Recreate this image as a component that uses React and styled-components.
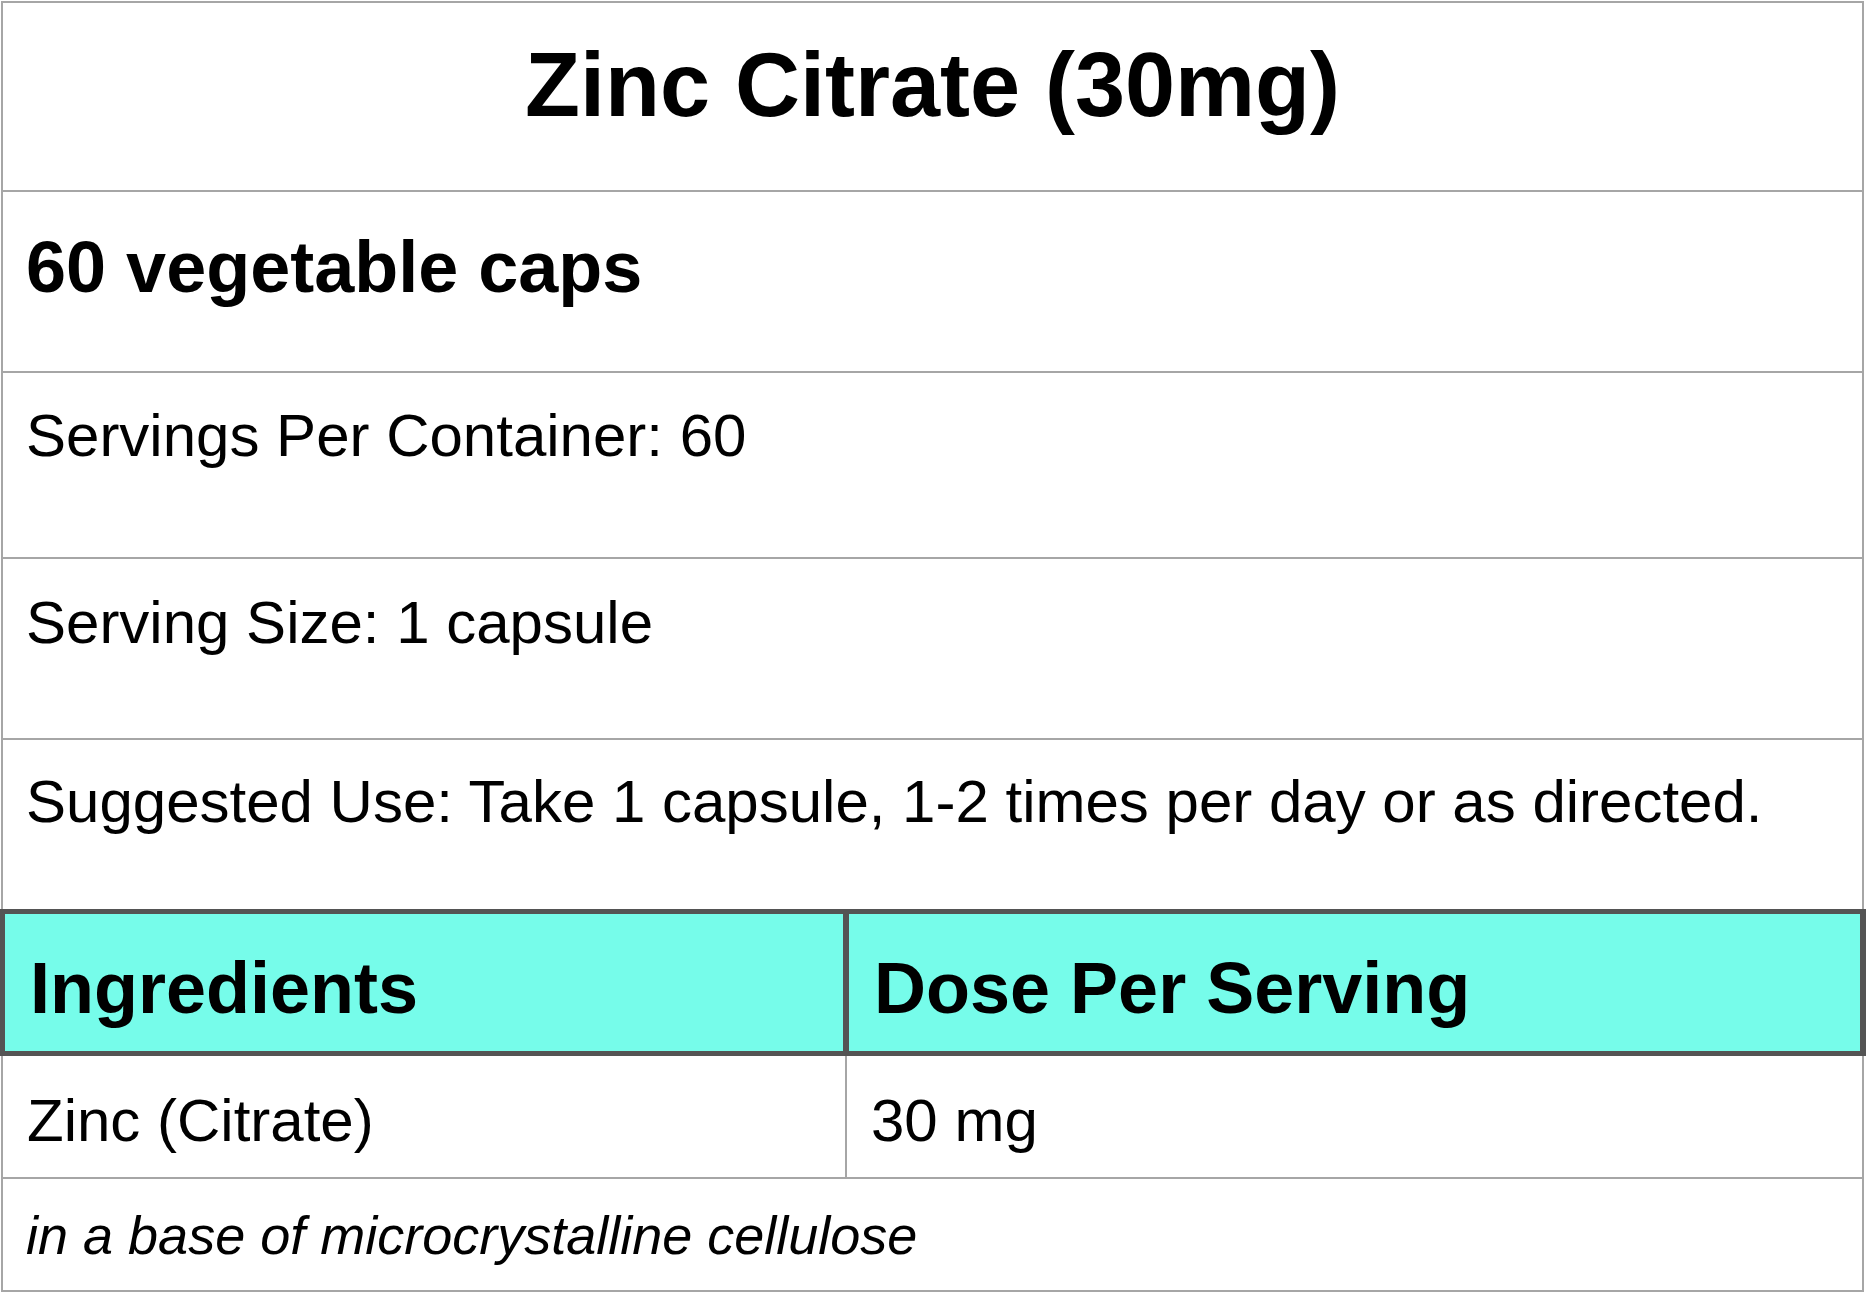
import React from 'react';
import styled, { createGlobalStyle } from 'styled-components';

const GlobalStyle = createGlobalStyle`
  html, body {
    margin: 0;
    padding: 0;
    background: #ffffff;
  }
  body {
    font-family: "Liberation Sans", Arial, Helvetica, sans-serif;
    color: #000000;
  }
`;

const LINE = '#a6a6a6';
const DARK = '#545454';
const TEAL = '#76fcea';

const Label = styled.section`
  box-sizing: border-box;
  width: 1863px;
  margin: 1px 0 0 1px;
  border: 2px solid ${LINE};
`;

const Row = styled.div`
  box-sizing: content-box;
  height: ${(p) => p.$h}px;
  padding: ${(p) => p.$top}px 0 0 23px;
  border-top: ${(p) => (p.$first ? 'none' : `2px solid ${LINE}`)};
  overflow: hidden;
`;

const Title = styled.h1`
  margin: 0;
  padding-right: 23px;
  font-size: 90px;
  font-weight: 700;
  line-height: normal;
  text-align: center;
`;

const SubTitle = styled.h2`
  margin: 0;
  font-size: 72px;
  font-weight: 700;
  line-height: normal;
`;

const Text = styled.p`
  margin: 0;
  font-size: ${(p) => p.$size || 60}px;
  font-style: ${(p) => (p.$italic ? 'italic' : 'normal')};
  line-height: normal;
  white-space: nowrap;
`;

const HeadRow = styled.div`
  display: grid;
  grid-template-columns: 838px 1fr;
  column-gap: 6px;
  margin: 0 -4px 0 -3px;
  padding: 5px 6px 5px 5px;
  background: ${DARK};
`;

const HeadCell = styled.div`
  box-sizing: border-box;
  height: 137px;
  padding: 33px 0 0 25px;
  background: ${TEAL};
  font-size: 72px;
  font-weight: 700;
  line-height: normal;
  white-space: nowrap;
`;

const DataRow = styled.div`
  display: grid;
  grid-template-columns: 842px 1fr;
  height: 121px;
`;

const DataCell = styled.div`
  padding: 30px 0 0 24px;
  border-left: ${(p) => (p.$divider ? `2px solid ${LINE}` : 'none')};
  font-size: 60px;
  line-height: normal;
  white-space: nowrap;
`;

const facts = [
  { text: 'Servings Per Container: 60', h: 184, top: 28 },
  { text: 'Serving Size: 1 capsule', h: 179, top: 29 },
  { text: 'Suggested Use: Take 1 capsule, 1-2 times per day or as directed.', h: 169, top: 27 },
];

const ingredients = [{ name: 'Zinc (Citrate)', dose: '30 mg' }];

const App = () => {
  return (
    <>
      <GlobalStyle />
      <Label>
        <Row $first $h={156} $top={31}>
          <Title>Zinc Citrate (30mg)</Title>
        </Row>
        <Row $h={145} $top={34}>
          <SubTitle>60 vegetable caps</SubTitle>
        </Row>
        {facts.map((f) => (
          <Row key={f.text} $h={f.h - f.top} $top={f.top}>
            <Text>{f.text}</Text>
          </Row>
        ))}
        <HeadRow>
          <HeadCell>Ingredients</HeadCell>
          <HeadCell>Dose Per Serving</HeadCell>
        </HeadRow>
        {ingredients.map((item) => (
          <DataRow key={item.name}>
            <DataCell>{item.name}</DataCell>
            <DataCell $divider>{item.dose}</DataCell>
          </DataRow>
        ))}
        <Row $h={86} $top={25}>
          <Text $size={54} $italic>in a base of microcrystalline cellulose</Text>
        </Row>
      </Label>
    </>
  );
};

export default App;
